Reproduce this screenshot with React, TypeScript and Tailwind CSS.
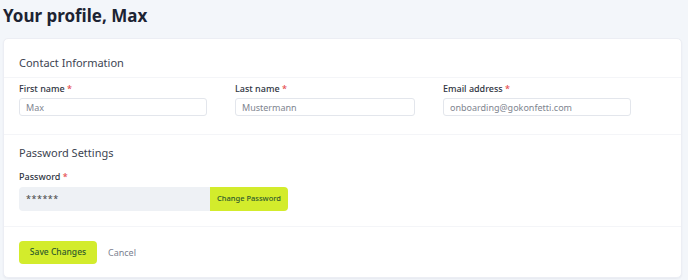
import { useState } from 'react';

const font = { fontFamily: '"Noto Sans", "Open Sans", sans-serif' };

function Label({ text }: { text: string }) {
  return (
    <div className="h-[12px] leading-[12px] text-[9px] font-medium text-[#2f3542] mb-[3px]">
      {text} <span className="text-[#e5484d]">*</span>
    </div>
  );
}

const inputCls = 'block w-full h-[18px] px-[6px] text-[9px] text-[#80858f] border border-[#e3e6ec] rounded-[3px] outline-none';

export default function App() {
  const [firstName, setFirstName] = useState('Max');
  const [lastName, setLastName] = useState('Mustermann');
  const [email, setEmail] = useState('onboarding@gokonfetti.com');

  return (
    <div className="w-[688px] h-[280px] bg-[#f3f6fa] overflow-hidden" style={font}>
      <div className="pl-[3px] pr-[6px] pt-[5px]">
        <h1 className="text-[17px] font-bold text-[#1c2333] leading-[22px] mb-[11px]">Your profile, Max</h1>
        <div className="bg-white rounded-[5px] border border-[#eceef4] shadow-[0_1px_2px_rgba(30,40,80,0.06)]">
          <div className="px-[15px] pt-[16px] pb-[7px] border-b border-[#f4f5f8]">
            <h2 className="text-[11px] leading-[15px] text-[#3d4451]">Contact Information</h2>
          </div>
          <div className="flex px-[15px] pt-[5px] pb-[18px] border-b border-[#f4f5f8]">
            <div className="w-[188px] mr-[28px]">
              <Label text="First name" />
              <input value={firstName} onChange={e => setFirstName(e.target.value)} className={inputCls} />
            </div>
            <div className="w-[180px] mr-[28px]">
              <Label text="Last name" />
              <input value={lastName} onChange={e => setLastName(e.target.value)} className={inputCls} />
            </div>
            <div className="w-[188px]">
              <Label text="Email address" />
              <input value={email} onChange={e => setEmail(e.target.value)} className={inputCls} />
            </div>
          </div>
          <div className="px-[15px] pt-[11px] pb-[15px] border-b border-[#f4f5f8]">
            <h2 className="text-[11px] leading-[14px] text-[#3d4451] mb-[11px]">Password Settings</h2>
            <div className="h-[12px] leading-[12px] text-[9px] font-medium text-[#2f3542] mb-[4px]">
              Password <span className="text-[#e5484d]">*</span>
            </div>
            <div className="flex w-[269px] h-[24px]">
              <div className="flex-1 bg-[#eef1f5] rounded-l-[4px] flex items-center px-[7px] text-[9px] text-[#444] tracking-[0.5px]">******</div>
              <button className="w-[78px] bg-[#d3ec2c] rounded-r-[4px] text-[7.5px] font-medium text-[#2f5a2c]">Change Password</button>
            </div>
          </div>
          <div className="px-[15px] pt-[14px] pb-[13px] flex items-center gap-[11px]">
            <button className="w-[78px] h-[23px] bg-[#d3ec2c] rounded-[4px] text-[8.5px] font-medium text-[#2f5a2c]">Save Changes</button>
            <button className="text-[9px] text-[#7b8190]">Cancel</button>
          </div>
        </div>
      </div>
    </div>
  );
}
